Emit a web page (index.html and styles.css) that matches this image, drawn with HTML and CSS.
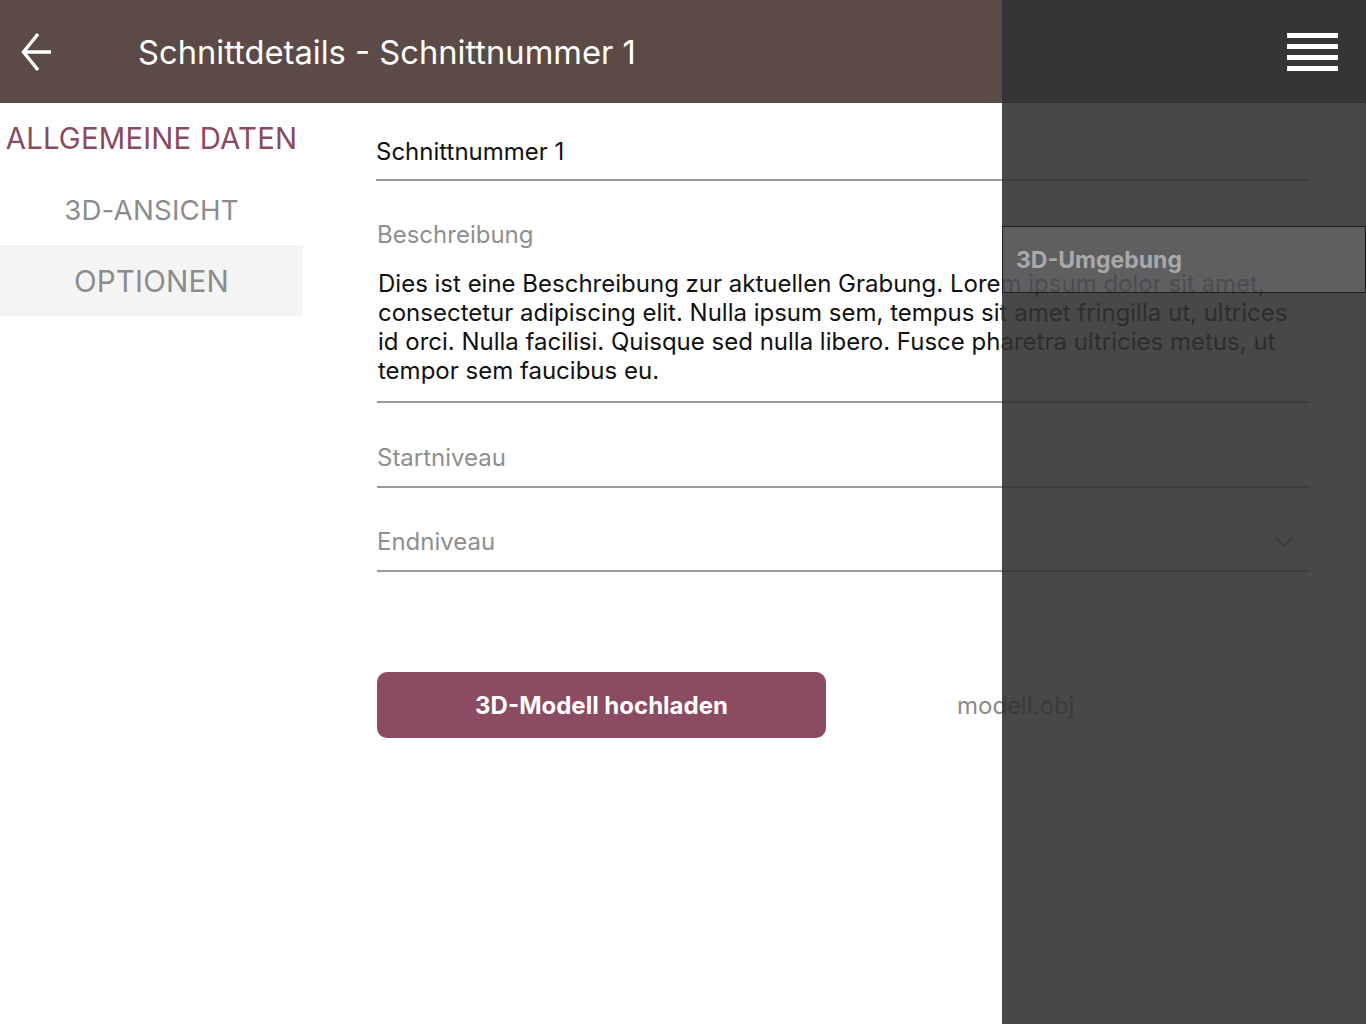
FILE: index.html
```html
<!DOCTYPE html>
<html lang="de">
<head>
<meta charset="utf-8">
<title>Schnittdetails</title>
<link rel="stylesheet" href="styles.css">
</head>
<body>
<header class="topbar">
  <button class="back" aria-label="Zurück">
    <svg width="32" height="42" viewBox="0 0 32 42"><path d="M31 21H4M18 3L3.5 21 18 39" fill="none" stroke="#fff" stroke-width="3.4"/></svg>
  </button>
  <h1 class="title">Schnittdetails - Schnittnummer 1</h1>
</header>
<div class="layout">
  <nav class="sidenav">
    <a class="navitem active">ALLGEMEINE DATEN</a>
    <a class="navitem small">3D-ANSICHT</a>
    <a class="navitem selected">OPTIONEN</a>
  </nav>
  <main class="form">
    <div class="field first"><span class="value">Schnittnummer 1</span></div>
    <div class="field area">
      <span class="label">Beschreibung</span>
      <p class="text">Dies ist eine Beschreibung zur aktuellen Grabung. Lorem ipsum dolor sit amet,<br>consectetur adipiscing elit. Nulla ipsum sem, tempus sit amet fringilla ut, ultrices<br>id orci. Nulla facilisi. Quisque sed nulla libero. Fusce pharetra ultricies metus, ut<br>tempor sem faucibus eu.</p>
    </div>
    <div class="field plain"><span class="label">Startniveau</span></div>
    <div class="field select"><span class="label">Endniveau</span>
      <svg class="chev" width="20" height="12" viewBox="0 0 20 12"><path d="M1 1l9 9 9-9" fill="none" stroke="#a6a6a6" stroke-width="2"/></svg>
    </div>
    <div class="upload">
      <button class="btn">3D-Modell hochladen</button>
      <span class="file">modell.obj</span>
    </div>
  </main>
</div>
<aside class="drawer">
  <div class="drawer-top">
    <span class="burger"><i></i><i></i><i></i><i></i></span>
  </div>
  <div class="drawer-item">3D-Umgebung</div>
</aside>
</body>
</html>
```
FILE: styles.css
```css
* { box-sizing: border-box; }
html, body { margin: 0; padding: 0; }
body {
  font-family: Inter, "Noto Sans", "Liberation Sans", sans-serif;
  background: #fff;
  width: 1366px;
  height: 1024px;
  overflow: hidden;
  position: relative;
}
.topbar {
  height: 103px;
  background: #5c4a47;
  display: flex;
  align-items: center;
}
.back {
  background: none;
  border: 0;
  padding: 0;
  margin-left: 20px;
  width: 32px;
  height: 42px;
  display: flex;
}
.title {
  margin: 0 0 0 86px;
  color: #fff;
  font-weight: 400;
  font-size: 32.7px;
}
.layout { display: flex; }
.sidenav {
  width: 303px;
  display: flex;
  flex-direction: column;
}
.navitem {
  height: 71px;
  display: flex;
  align-items: center;
  justify-content: center;
  font-size: 29.3px;
  color: #8c8c8c;
  letter-spacing: 0.2px;
}
.navitem.active { color: #8b4a5f; }
.navitem.small { font-size: 27.7px; }
.navitem.selected { background: #f4f4f4; font-size: 29.6px; }
.form {
  flex: 1;
  padding: 34px 56px 0 74px;
  display: flex;
  flex-direction: column;
}
.field {
  border-bottom: 2px solid #9a9a9a;
  display: flex;
  align-items: center;
  font-size: 24px;
  line-height: 30px;
}
.field.first { padding-bottom: 12px; margin-left: -1px; }
.value { color: #111; }
.label { color: #8f8f8f; }
.field.area {
  flex-direction: column;
  align-items: flex-start;
  margin-top: 39px;
  padding-bottom: 16px;
}
.text {
  margin: 19px 0 0 1px;
  color: #111;
  line-height: 29px;
  font-size: 24px;
}
.field.plain { margin-top: 40px; padding-bottom: 13px; }
.select { margin-top: 39px; padding-bottom: 13px; justify-content: space-between; }
.chev { margin-right: 16px; }
.upload {
  margin-top: 100px;
  display: flex;
  align-items: center;
}
.btn {
  width: 449px;
  height: 66px;
  border: 0;
  border-radius: 10px;
  background: #8b4b62;
  color: #fff;
  font-family: inherit;
  font-size: 24px;
  font-weight: 700;
}
.file {
  margin-left: 131px;
  font-size: 24px;
  color: #8a8a8a;
}
.drawer {
  position: absolute;
  top: 0;
  right: 0;
  width: 364px;
  height: 1024px;
  background: rgba(49, 49, 49, 0.89);
  display: flex;
  flex-direction: column;
}
.drawer-top {
  height: 103px;
  display: flex;
  align-items: center;
  justify-content: flex-end;
  padding-right: 28px;
}
.burger {
  display: flex;
  flex-direction: column;
  gap: 6px;
  width: 51px;
}
.burger i {
  display: block;
  height: 5px;
  background: #fff;
}
.drawer-item {
  margin-top: 123px;
  height: 67px;
  border: 1px solid #1e1e1e;
  background: rgba(150, 148, 160, 0.3);
  color: #a9a9a9;
  font-weight: 700;
  font-size: 23px;
  display: flex;
  align-items: center;
  padding-left: 13px;
}
```
